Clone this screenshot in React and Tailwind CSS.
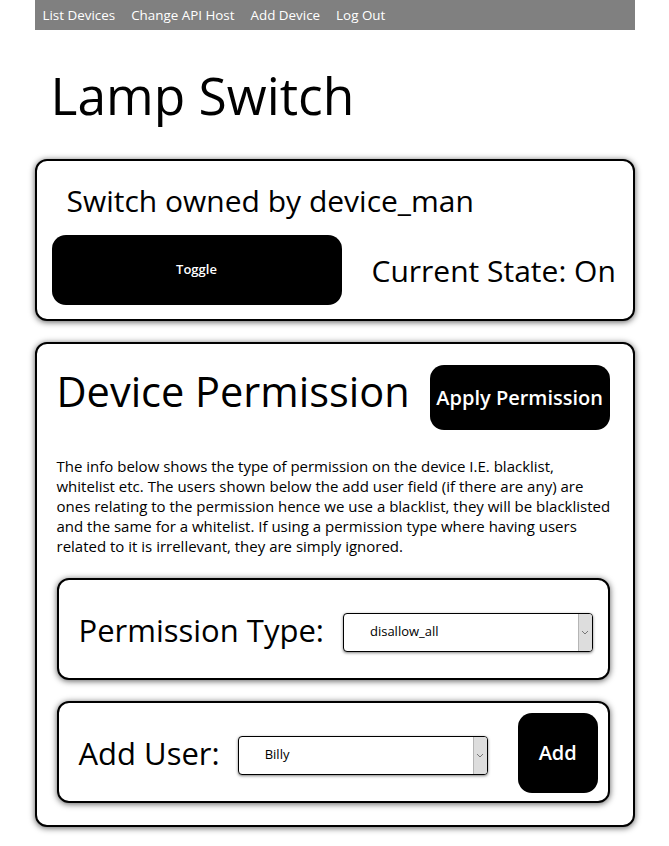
import React from "react";

const font = { fontFamily: '"Open Sans", "Noto Sans", sans-serif' };

const FakeSelect = ({ value, width }) => (
  <div
    className={`flex h-[39px] items-stretch overflow-hidden rounded-[4px] border-[1.5px] border-black bg-white shadow-[0_1px_3px_rgba(0,0,0,0.5)] ${width}`}
  >
    <div className="flex flex-1 items-center pl-[26px] text-[13px] text-black">{value}</div>
    <div className="flex w-[14px] items-center justify-center border-l border-[#b5b5b5] bg-[#dddddd]">
      <svg width="8" height="5" viewBox="0 0 8 5" fill="none">
        <path d="M1 1l3 3 3-3" stroke="#777" strokeWidth="1" />
      </svg>
    </div>
  </div>
);

const card =
  "rounded-[12px] border-2 border-black bg-white shadow-[0_1px_6px_rgba(0,0,0,0.65)]";

export default function App() {
  return (
    <div className="min-h-screen bg-white text-black" style={font}>
      <div className="mx-auto w-[600px]">
        <nav className="flex h-[30px] items-center bg-[#808080] text-[13.4px] text-white">
          <a className="px-2">List Devices</a>
          <a className="px-2">Change API Host</a>
          <a className="px-2">Add Device</a>
          <a className="px-2">Log Out</a>
        </nav>

        <h1 className="mt-[30px] pl-[16px] text-[51.5px] leading-[70px]">Lamp Switch</h1>

        <section className={`${card} mt-[29px] h-[162px] px-[15px]`}>
          <h2 className="pl-[15px] pt-[20px] text-[30px] leading-[40px]">Switch owned by device_man</h2>
          <div className="mt-[14px] flex items-center">
            <button className="h-[70px] w-[290px] rounded-[14px] bg-black text-[13px] font-semibold text-white">
              Toggle
            </button>
            <span className="ml-[30px] text-[30px]">Current State: On</span>
          </div>
        </section>

        <section className={`${card} mt-[21px] pb-[22px]`}>
          <div className="flex items-start pl-[20px] pt-[21px]">
            <h2 className="-mt-[2px] text-[41.5px] leading-[56px]">Device Permission</h2>
            <button className="ml-[20px] h-[65px] w-[180px] rounded-[14px] bg-black text-[20px] font-semibold text-white">
              Apply Permission
            </button>
          </div>
          <p className="mt-[26px] px-[20px] text-[15px] leading-[20px]">
            The info below shows the type of permission on the device I.E. blacklist, whitelist etc. The users shown
            below the add user field (if there are any) are ones relating to the permission hence we use a blacklist,
            they will be blacklisted and the same for a whitelist. If using a permission type where having users related
            to it is irrellevant, they are simply ignored.
          </p>

          <div className={`${card} ml-[20px] mt-[22px] flex h-[102px] w-[553px] items-center pl-[20px]`}>
            <span className="mt-[2px] text-[31px]">Permission Type:</span>
            <div className="ml-[19px] mt-[6px]">
              <FakeSelect value="disallow_all" width="w-[250px]" />
            </div>
          </div>

          <div className={`${card} ml-[20px] mt-[21px] flex h-[102px] w-[553px] items-center pl-[20px]`}>
            <span className="mt-[2px] text-[31px]">Add User:</span>
            <div className="ml-[18px] mt-[6px]">
              <FakeSelect value="Billy" width="w-[250px]" />
            </div>
            <button className="ml-[30px] mt-[2px] h-[80px] w-[80px] rounded-[14px] bg-black text-[20px] font-semibold text-white">
              Add
            </button>
          </div>
        </section>
      </div>
    </div>
  );
}
